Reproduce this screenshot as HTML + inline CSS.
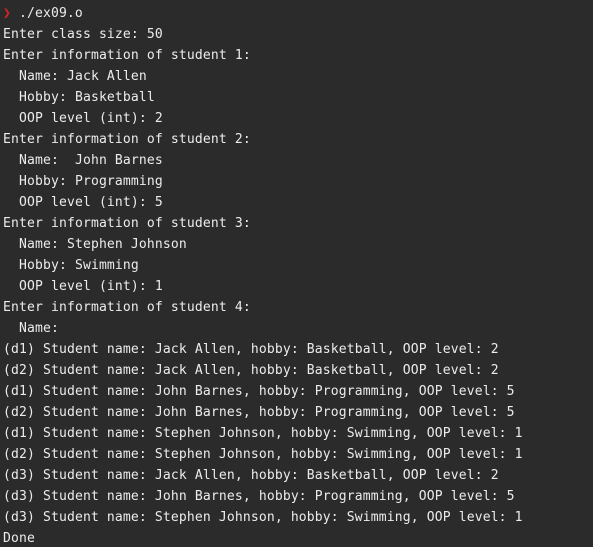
<!DOCTYPE html><html><head><style>
html,body{margin:0;padding:0;background:#2b2b2b;width:593px;height:547px;overflow:hidden}
pre{margin:0;padding:3px 0 0 3px;font-family:"DejaVu Sans Mono",monospace;font-size:13.05px;letter-spacing:0.14px;line-height:21px;color:#ececec;white-space:pre}
.r{color:#d22;font-size:13px}
</style></head><body><pre><span class="r">❯</span> ./ex09.o
Enter class size: 50
Enter information of student 1:
  Name: Jack Allen
  Hobby: Basketball
  OOP level (int): 2
Enter information of student 2:
  Name:  John Barnes
  Hobby: Programming
  OOP level (int): 5
Enter information of student 3:
  Name: Stephen Johnson
  Hobby: Swimming
  OOP level (int): 1
Enter information of student 4:
  Name:
(d1) Student name: Jack Allen, hobby: Basketball, OOP level: 2
(d2) Student name: Jack Allen, hobby: Basketball, OOP level: 2
(d1) Student name: John Barnes, hobby: Programming, OOP level: 5
(d2) Student name: John Barnes, hobby: Programming, OOP level: 5
(d1) Student name: Stephen Johnson, hobby: Swimming, OOP level: 1
(d2) Student name: Stephen Johnson, hobby: Swimming, OOP level: 1
(d3) Student name: Jack Allen, hobby: Basketball, OOP level: 2
(d3) Student name: John Barnes, hobby: Programming, OOP level: 5
(d3) Student name: Stephen Johnson, hobby: Swimming, OOP level: 1
Done</pre></body></html>
